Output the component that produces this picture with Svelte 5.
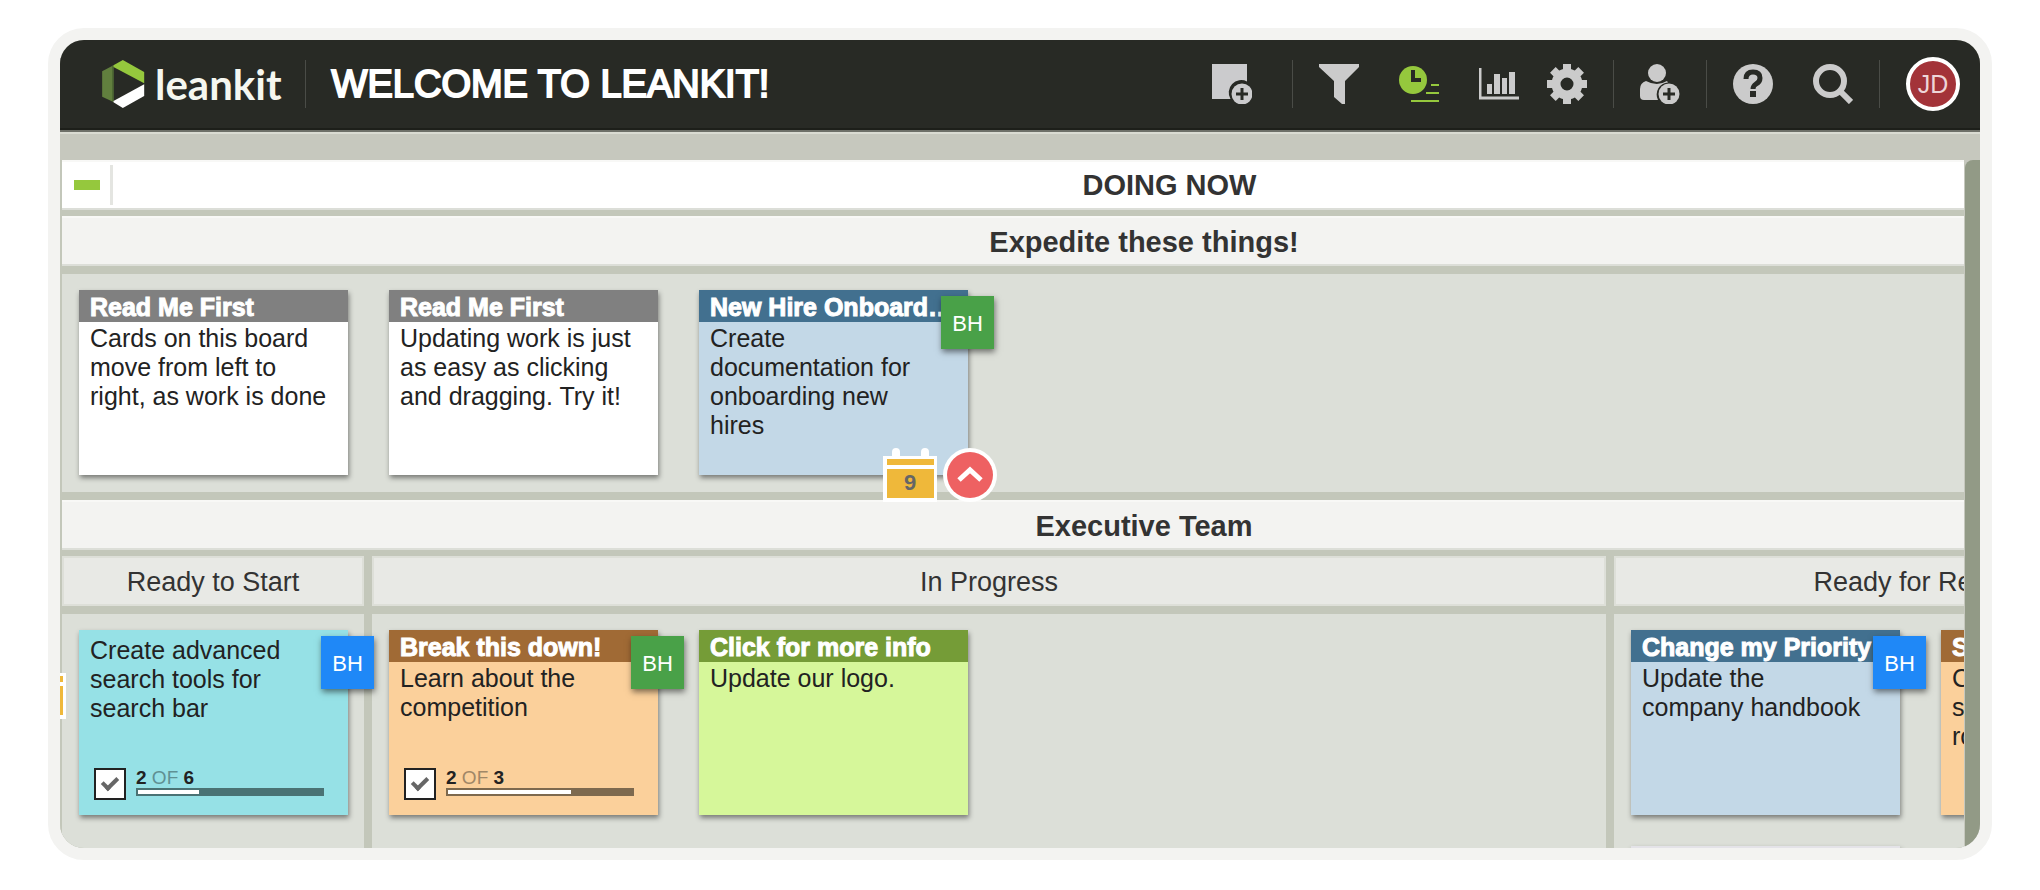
<script lang="ts">
    type Card = {
        title?: string;
        text: string;
        color: string;
        bar?: string;
        user?: string;
        userColor?: string;
        due?: string;
        overdueSide?: boolean;
        priority?: boolean;
        done?: number;
        total?: number;
        track?: string;
        muted?: string;
    };

    const green = '#49a148';
    const blue = '#1f88f7';

    const expedite: Card[] = [
        { title: 'Read Me First', text: 'Cards on this board move from left to right, as work is done', color: '#ffffff', bar: '#808080' },
        { title: 'Read Me First', text: 'Updating work is just as easy as clicking and dragging. Try it!', color: '#ffffff', bar: '#808080' },
        { title: 'New Hire Onboarding', text: 'Create documentation for onboarding new hires', color: '#c3d8e7', bar: '#42708f', user: 'BH', userColor: green, due: '9', priority: true }
    ];

    const lanes: { name: string; width: number; cards: Card[] }[] = [
        {
            name: 'Ready to Start',
            width: 302,
            cards: [
                { text: 'Create advanced search tools for search bar', color: '#96e1e6', user: 'BH', userColor: blue, overdueSide: true, done: 2, total: 6, track: '#4a7274', muted: '#5f9093' }
            ]
        },
        {
            name: 'In Progress',
            width: 1234,
            cards: [
                { title: 'Break this down!', text: 'Learn about the competition', color: '#fbd09b', bar: '#a06a35', user: 'BH', userColor: green, done: 2, total: 3, track: '#7d694e', muted: '#a08767' },
                { title: 'Click for more info', text: 'Update our logo.', color: '#d6f79a', bar: '#759c37' }
            ]
        },
        {
            name: 'Ready for Review',
            width: 612,
            cards: [
                { title: 'Change my Priority', text: 'Update the company handbook', color: '#c3d8e7', bar: '#42708f', user: 'BH', userColor: blue },
                { title: 'Social Plan', text: 'Create a simpler schedule for the roadmap', color: '#fbd09b', bar: '#a06a35' },
                { text: '', color: '#e4e3e8' }
            ]
        }
    ];

    let collapsed = $state(false);
</script>

{#snippet calendar(day: string)}
    <svg width="54" height="54" viewBox="0 0 54 54">
        <path d="M0 8h9V4a4 4 0 0 1 8 0v4h21V4a4 4 0 0 1 8 0v4h8v46H0z" fill="#fff" />
        <path d="M4 11h47v6H4zM4 21h47v29H4z" fill="#efb83a" />
        <text x="27" y="42" text-anchor="middle">{day}</text>
    </svg>
{/snippet}

{#snippet cardView(card: Card)}
    <article class="card" class:assigned={card.user} style:background={card.color}>
        {#if card.title}
            <h4 style:background={card.bar}>{card.title}</h4>
        {/if}
        <p class:untitled={!card.title}>{card.text}</p>
        {#if card.total}
            <div class="tasks">
                <input type="checkbox" checked aria-label="Tasks for {card.text}" />
                <div class="progress">
                    <span class="count" style:color={card.muted}><b>{card.done}</b> OF <b>{card.total}</b></span>
                    <div class="track" style:background={card.track}>
                        <div class="fill" style:width="{(card.done! / card.total) * 100}%"></div>
                    </div>
                </div>
            </div>
        {/if}
        {#if card.user}
            <span class="user" style:background={card.userColor}>{card.user}</span>
        {/if}
        {#if card.due || card.priority}
            <div class="flags">
                {#if card.due}{@render calendar(card.due)}{/if}
                {#if card.priority}
                    <svg width="54" height="54" viewBox="0 0 54 54">
                        <circle cx="27" cy="27" r="27" fill="#fff" />
                        <circle cx="27" cy="27" r="23" fill="#ee6162" />
                        <path d="M16 32l11-10 11 10" fill="none" stroke="#fff" stroke-width="5" />
                    </svg>
                {/if}
            </div>
        {/if}
        {#if card.overdueSide}
            <div class="side-flag">{@render calendar('')}</div>
        {/if}
    </article>
{/snippet}

<div class="app">
    <header>
        <a class="logo" href="#home">
            <svg width="43" height="48" viewBox="0 0 128 144">
                <path d="M0 34l34-18v110L0 110z" fill="#617f3e" />
                <path d="M30 18l4-2v110l-4-2z" fill="#4b6532" />
                <path d="M34 16L62 0l64 36v34L34 21z" fill="#95c83d" />
                <path d="M126 73v35l-64 36-28-17v-4z" fill="#fff" />
            </svg>
            <span>leankit</span>
        </a>
        <span class="sep first"></span>
        <h1>WELCOME TO LEANKIT!</h1>

        <nav>
            <button class="add-card" aria-label="Add card">
                <svg viewBox="0 0 40 40">
                    <path d="M0 0h35v17.500A12.500 12.500 0 0 0 18.500 35H0z" fill="#cbcbcd" />
                    <circle cx="30" cy="30" r="10.500" fill="#cbcbcd" />
                    <path d="M30 24v12M24 30h12" stroke="#282a25" stroke-width="3" />
                </svg>
            </button>
            <span class="sep"></span>
            <div class="group">
                <button aria-label="Filter">
                    <svg viewBox="0 0 40 40"><path d="M0 0h40v3L26 17v23h-3l-8-7V17L0 3z" fill="#cbcbcb" /></svg>
                </button>
                <button aria-label="Timeline">
                    <svg viewBox="0 0 40 40">
                        <circle cx="14" cy="16" r="14" fill="#95c83d" />
                        <path d="M14 6v10h8" fill="none" stroke="#282a25" stroke-width="4" />
                        <path d="M32 21h8M27 29h13M12 37h28" stroke="#95c83d" stroke-width="2" />
                    </svg>
                </button>
                <button aria-label="Analytics">
                    <svg viewBox="0 0 40 40">
                        <path d="M1 4v30h39" fill="none" stroke="#cbcbcb" stroke-width="3" />
                        <path d="M8 20h5v10H8zM15 10h6v20h-6zM23 14h5v16h-5zM30 8h6v22h-6z" fill="#cbcbcb" />
                    </svg>
                </button>
            </div>
            <button class="settings" aria-label="Settings">
                <svg viewBox="0 0 40 40">
                    <circle cx="20" cy="20" r="11" fill="none" stroke="#cbcbcb" stroke-width="9" />
                    {#each [0, 45, 90, 135] as angle}
                        <path d="M16 0h8v7h-8zM16 33h8v7h-8z" fill="#cbcbcb" transform="rotate({angle} 20 20)" />
                    {/each}
                </svg>
            </button>
            <span class="sep"></span>
            <button aria-label="Add user">
                <svg viewBox="0 0 40 40">
                    <circle cx="17" cy="9" r="9" fill="#cbcbcb" />
                    <path d="M6 17q11 6 21 0l1 1.500A12 12 0 0 0 18 36H4q-4 0-4-4v-7q0-6 6-8z" fill="#cbcbcb" />
                    <circle cx="29" cy="30" r="10.500" fill="#cbcbcb" />
                    <path d="M29 24v12M23 30h12" stroke="#282a25" stroke-width="3" />
                </svg>
            </button>
            <span class="sep"></span>
            <div class="group">
                <button aria-label="Help">
                    <svg viewBox="0 0 40 40">
                        <circle cx="20" cy="20" r="20" fill="#cbcbcb" />
                        <path d="M13 15q0-7 7-7t7 6q0 4-4 6-3 2-3 5" fill="none" stroke="#282a25" stroke-width="5" />
                        <path d="M17 27h6v6h-6z" fill="#282a25" />
                    </svg>
                </button>
                <button aria-label="Search">
                    <svg viewBox="0 0 40 40">
                        <circle cx="17" cy="17" r="14" fill="none" stroke="#cbcbcb" stroke-width="6" />
                        <path d="M27 27l11 11" stroke="#cbcbcb" stroke-width="6" />
                    </svg>
                </button>
            </div>
            <span class="sep"></span>
            <button class="avatar">JD</button>
        </nav>
    </header>

    <main>
        <div class="viewport">
            <div class="board">
                <div class="lane-head top">
                    <button class="collapse" aria-label="Collapse lane" onclick={() => (collapsed = !collapsed)}><span></span></button>
                    <h2>DOING NOW</h2>
                </div>
                {#if !collapsed}
                    <h3 class="lane-head">Expedite these things!</h3>
                    <section class="lane expedite">
                        {#each expedite as card}
                            {@render cardView(card)}
                        {/each}
                    </section>
                    <h3 class="lane-head">Executive Team</h3>
                    <div class="columns">
                        {#each lanes as lane}
                            <section class="column" style:width="{lane.width}px">
                                <h3>{lane.name}</h3>
                                <div class="lane">
                                    {#each lane.cards as card}
                                        {@render cardView(card)}
                                    {/each}
                                </div>
                            </section>
                        {/each}
                    </div>
                {/if}
            </div>
        </div>
        <div class="scrollbar"></div>
    </main>
</div>

<style>
    :global(body) {
        background: #fff;
    }

    .app {
        box-sizing: border-box;
        display: flex;
        flex-direction: column;
        height: calc(100vh - 58px);
        margin: 28px 48px 30px;
        border: 12px solid #f3f3f1;
        border-radius: 36px;
        overflow: hidden;
        background: #c6c8be;
        color: #333;
        font-family: "Liberation Sans", Arial, sans-serif;
    }

    h1, h2, h3, h4, p {
        margin: 0;
    }

    button {
        padding: 0;
        border: 0;
        background: none;
        font: inherit;
        cursor: pointer;
    }

    svg {
        display: block;
    }

    header {
        display: flex;
        align-items: center;
        flex: none;
        height: 88px;
        padding: 0 20px 0 42px;
        border-bottom: 2px solid #1d1f1a;
        background: #282a25;
        box-shadow: 0 2px #6d7068, 0 4px #d9dbd2;
    }

    .logo {
        display: flex;
        align-items: center;
        gap: 10px;
        color: #f5f7f0;
        text-decoration: none;
        font: 700 42px/48px Lato, sans-serif;
    }

    .sep {
        width: 1px;
        height: 48px;
        margin: 0 26px;
        background: #4a4c47;
    }

    .sep.first {
        margin: 0 26px 0 23px;
    }

    h1 {
        color: #fff;
        font-size: 38px;
        font-weight: 400;
        line-height: 48px;
        -webkit-text-stroke: 2px #fff;
        white-space: nowrap;
    }

    nav {
        display: flex;
        align-items: center;
        margin-left: auto;
    }

    nav button {
        width: 40px;
        height: 40px;
    }

    .group {
        display: flex;
        gap: 40px;
    }

    .add-card {
        margin-right: 14px;
    }

    .settings {
        margin-left: 28px;
    }

    nav .avatar {
        box-sizing: border-box;
        width: 54px;
        height: 54px;
        border: 4px solid #fff;
        border-radius: 50%;
        background: #a33339;
        color: #eed5d8;
        font-size: 25px;
    }

    main {
        display: flex;
        flex: 1;
        min-height: 0;
        padding-top: 30px;
    }

    .viewport {
        flex: 1;
        min-width: 0;
        overflow: hidden;
    }

    .board {
        display: flex;
        flex-direction: column;
        box-sizing: border-box;
        width: max-content;
        height: 100%;
        padding-left: 2px;
        background: #c3c7ba;
    }

    .scrollbar {
        width: 15px;
        margin-left: 1px;
        border-radius: 8px 0 0 0;
        background: #929a86;
    }

    .lane-head {
        box-sizing: border-box;
        flex: none;
        height: 50px;
        margin-bottom: 6px;
        border-top: 2px solid #f8f8f6;
        border-bottom: 2px solid #dcded8;
        background: #f3f3f1;
        font-size: 29px;
        line-height: 48px;
        text-align: center;
    }

    .lane-head.top {
        display: flex;
        align-items: center;
        background: #fff;
    }

    .collapse {
        width: 51px;
        height: 40px;
        padding-left: 12px;
        border-right: 3px solid #e4e5e1;
    }

    .collapse span {
        display: block;
        width: 26px;
        height: 10px;
        background: #95c83d;
    }

    h2 {
        flex: 1;
        font-size: 29px;
        line-height: 48px;
    }

    .lane {
        display: flex;
        flex-wrap: wrap;
        align-content: flex-start;
        gap: 31px 41px;
        padding: 16px 0 0 17px;
        background: #dcdfd8;
    }

    .expedite {
        flex: none;
        height: 202px;
        margin: 2px 0 8px;
    }

    .columns {
        display: flex;
        flex: 1;
        gap: 8px;
        min-height: 0;
    }

    .column {
        display: flex;
        flex-direction: column;
        gap: 8px;
    }

    .column h3 {
        box-sizing: border-box;
        flex: none;
        height: 50px;
        border: 2px solid #dddfd8;
        background: #e8e9e5;
        font-size: 27px;
        font-weight: 400;
        line-height: 48px;
        text-align: center;
    }

    .column .lane {
        flex: 1;
    }

    .card {
        position: relative;
        width: 269px;
        height: 185px;
        box-shadow: 1px 3px 5px rgba(0, 0, 0, 0.45);
        color: #222;
    }

    h4 {
        height: 32px;
        padding: 0 10px 0 11px;
        overflow: hidden;
        color: #fff;
        font-size: 25px;
        line-height: 34px;
        text-overflow: ellipsis;
        white-space: nowrap;
        -webkit-text-stroke: 1px #fff;
    }

    p {
        padding: 2px 10px 0 11px;
        font-size: 25px;
        line-height: 29px;
    }

    p.untitled {
        padding-top: 6px;
    }

    .assigned p {
        padding-right: 28px;
    }

    .tasks {
        position: absolute;
        right: 24px;
        bottom: 15px;
        left: 15px;
        display: flex;
        gap: 10px;
    }

    .tasks input {
        appearance: none;
        box-sizing: border-box;
        width: 32px;
        height: 32px;
        margin: 0;
        border: 2px solid #222;
        background: #fff;
    }

    .tasks input:checked::after {
        content: '';
        display: block;
        width: 6px;
        height: 12px;
        margin: 4px 0 0 9px;
        border: solid #666;
        border-width: 0 4px 4px 0;
        transform: rotate(45deg);
    }

    .progress {
        flex: 1;
    }

    .count {
        display: block;
        font-size: 19px;
        line-height: 20px;
    }

    .count b {
        color: #222;
    }

    .track {
        box-sizing: border-box;
        height: 8px;
        padding: 2px;
    }

    .fill {
        height: 4px;
        background: #fff;
    }

    .user {
        position: absolute;
        top: 6px;
        right: -26px;
        width: 53px;
        height: 53px;
        box-shadow: 1px 3px 6px rgba(0, 0, 0, 0.5);
        color: #fff;
        font-size: 22px;
        line-height: 56px;
        text-align: center;
    }

    .flags {
        position: absolute;
        right: -29px;
        bottom: -27px;
        display: flex;
        gap: 6px;
    }

    .flags text {
        fill: #666;
        font-size: 22px;
        font-weight: 700;
    }

    .side-flag {
        position: absolute;
        top: 35px;
        left: -67px;
    }
</style>
